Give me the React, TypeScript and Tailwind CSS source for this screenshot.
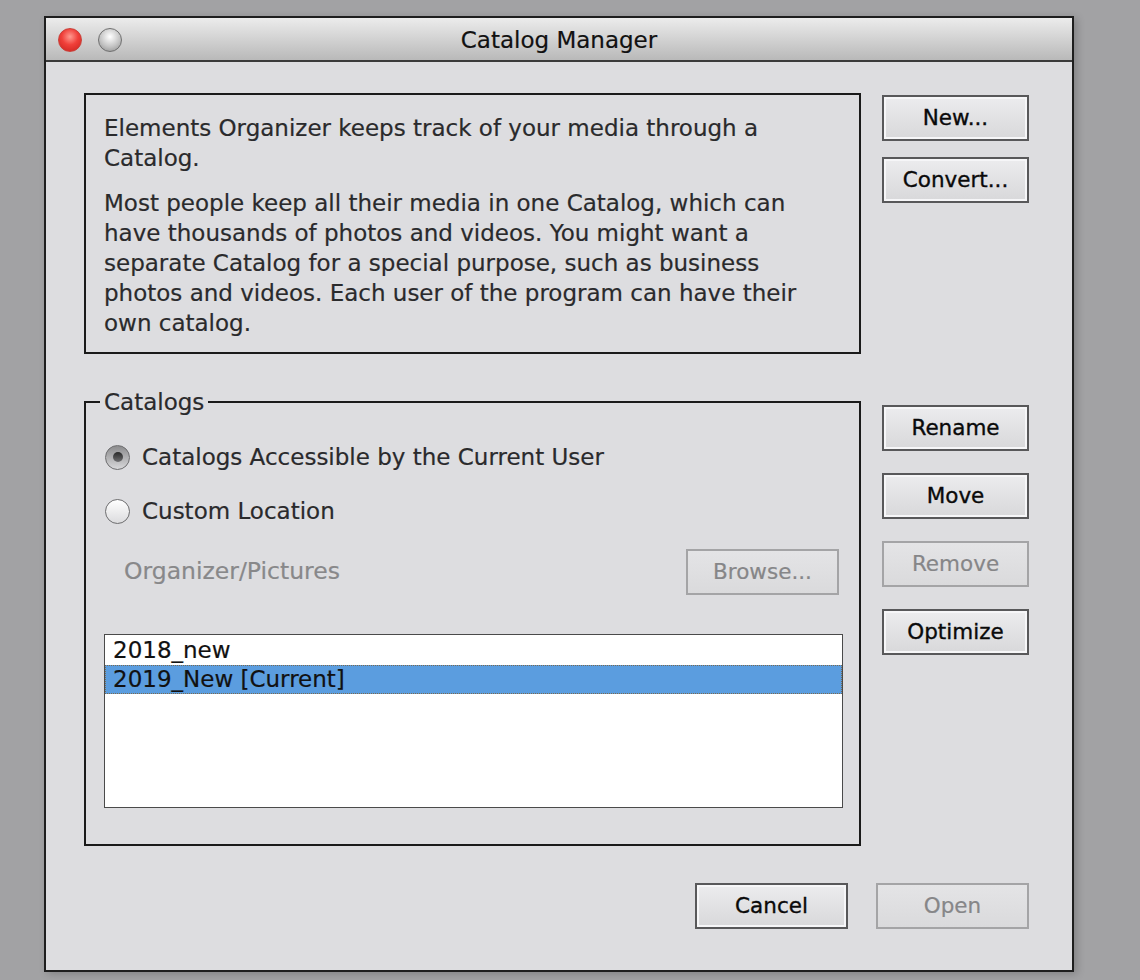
import React from 'react';

const font = { fontFamily: '"DejaVu Sans", "Noto Sans", sans-serif' };

type BtnProps = { label: string; disabled?: boolean; w?: string };

const DlgButton: React.FC<BtnProps> = ({ label, disabled, w = 'w-[147px]' }) => (
  <button
    className={
      disabled
        ? `${w} h-[46px] border-2 border-[#a4a4a6] bg-gradient-to-b from-[#e4e4e6] to-[#dadadc] text-[21.5px] text-[#868688] [-webkit-text-stroke:0.2px_#868688]`
        : `${w} h-[46px] border-2 border-[#58585a] bg-gradient-to-b from-[#ececee] to-[#d8d8da] text-[21.5px] text-[#0a0a0a] shadow-[inset_0_0_0_2px_#f6f6f8] [-webkit-text-stroke:0.35px_#0a0a0a]`
    }
  >
    {label}
  </button>
);

const Radio: React.FC<{ checked?: boolean; label: string }> = ({ checked, label }) => (
  <div className="flex h-[28px] items-center gap-[12px] pl-[1px]">
    <span
      className={
        checked
          ? 'flex h-[25px] w-[25px] items-center justify-center rounded-full border border-[#6d6d6f] bg-gradient-to-b from-[#8c8c8e] to-[#d8d8da]'
          : 'flex h-[25px] w-[25px] items-center justify-center rounded-full border border-[#6d6d6f] bg-gradient-to-b from-[#ffffff] to-[#dcdcde]'
      }
    >
      {checked && <span className="h-[10px] w-[10px] rounded-full bg-gradient-to-b from-[#2a2a2a] to-[#707072]" />}
    </span>
    <span className="text-[23px] text-[#2a2a2c] [-webkit-text-stroke:0.2px_#2a2a2c]">{label}</span>
  </div>
);

export default function App() {
  return (
    <div className="min-h-[980px] w-[1140px] bg-[#a2a2a4] pl-[44px] pt-[16px]" style={font}>
      <div className="h-[956px] w-[1030px] border-2 border-[#1e1e1e] bg-[#dddde0] shadow-[3px_2px_8px_rgba(0,0,0,0.2)]">
        {/* title bar */}
        <div className="relative flex h-[44px] items-center justify-center border-b-2 border-[#3a3a3a] bg-gradient-to-b from-[#ececec] to-[#b9b9b9]">
          <div className="absolute left-[12px] top-[10px] flex gap-[16px]">
            <span className="h-[24px] w-[24px] rounded-full border border-[#c9413a] bg-[radial-gradient(circle_at_50%_35%,#ff9a90_0%,#f0403a_45%,#c8201c_100%)]" />
            <span className="h-[24px] w-[24px] rounded-full border border-[#707070] bg-[radial-gradient(circle_at_50%_35%,#ffffff_0%,#c4c4c4_55%,#8a8a8a_100%)]" />
          </div>
          <span className="pt-[3px] text-[23px] text-[#111] [-webkit-text-stroke:0.2px_#111]">Catalog Manager</span>
        </div>

        <div className="pl-[38px] pr-[43px] pt-[31px]">
          {/* description row */}
          <div className="flex gap-[21px]">
            <div className="h-[261px] w-[777px] border-2 border-[#1a1a1a] px-[18px] pt-[18px] text-[23px] leading-[30px] text-[#2a2a2c] [-webkit-text-stroke:0.2px_#2a2a2c]">
              <p>
                Elements Organizer keeps track of your media through a<br />
                Catalog.
              </p>
              <p className="mt-[15px]">
                Most people keep all their media in one Catalog, which can
                <br />
                have thousands of photos and videos. You might want a
                <br />
                separate Catalog for a special purpose, such as business
                <br />
                photos and videos. Each user of the program can have their
                <br />
                own catalog.
              </p>
            </div>
            <div className="mt-[2px] flex flex-col gap-[16px]">
              <DlgButton label="New..." />
              <DlgButton label="Convert..." />
            </div>
          </div>

          {/* catalogs row */}
          <div className="mt-[36px] flex gap-[21px]">
            <fieldset className="h-[456px] w-[777px] min-w-0 border-2 border-[#1a1a1a] pl-[18px] pr-[16px]">
              <legend className="-ml-[4px] px-[4px] text-[23px] leading-[24px] text-[#2a2a2c] [-webkit-text-stroke:0.2px_#2a2a2c]">
                Catalogs
              </legend>
              <div className="mt-[29px] flex flex-col gap-[26px]">
                <Radio checked label="Catalogs Accessible by the Current User" />
                <Radio label="Custom Location" />
              </div>
              <div className="mt-[24px] flex items-center justify-between pl-[20px] pr-[4px]">
                <span className="text-[23.5px] text-[#88888a] [-webkit-text-stroke:0.2px_#88888a]">Organizer/Pictures</span>
                <DlgButton label="Browse..." disabled w="w-[153px]" />
              </div>
              <div className="mt-[39px] h-[174px] w-[739px] border border-[#4a4a4a] bg-white pt-[1px] text-[23px] leading-[29px] text-[#111] [-webkit-text-stroke:0.2px_#111]">
                <div className="px-[8px]">2018_new</div>
                <div className="border border-dotted border-[#7a6a50] bg-[#5b9ddf] px-[7px] leading-[27px]">
                  2019_New [Current]
                </div>
              </div>
            </fieldset>
            <div className="mt-[15px] flex flex-col gap-[22px]">
              <DlgButton label="Rename" />
              <DlgButton label="Move" />
              <DlgButton label="Remove" disabled />
              <DlgButton label="Optimize" />
            </div>
          </div>

          {/* footer */}
          <div className="mt-[37px] flex justify-end gap-[28px]">
            <DlgButton label="Cancel" w="w-[153px]" />
            <DlgButton label="Open" disabled w="w-[153px]" />
          </div>
        </div>
      </div>
    </div>
  );
}
